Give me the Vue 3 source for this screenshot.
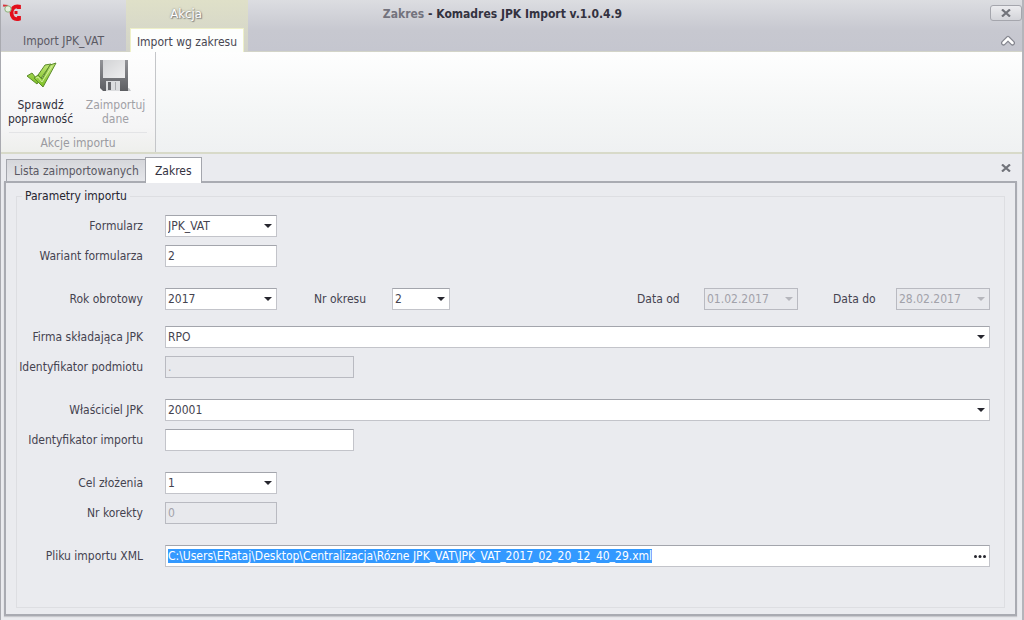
<script setup>
import { onMounted, ref } from 'vue'

const fileInput = ref(null)
const form = ref({
  form: 'JPK_VAT',
  variant: '2',
  year: '2017',
  period: '2',
  from: '01.02.2017',
  to: '28.02.2017',
  company: 'RPO',
  entityId: '.',
  owner: '20001',
  importId: '',
  purpose: '1',
  correction: '0',
  file: 'C:\\Users\\ERataj\\Desktop\\Centralizacja\\Rózne JPK_VAT\\JPK_VAT_2017_02_20_12_40_29.xml',
})

onMounted(() => {
  fileInput.value.focus({ preventScroll: true })
  fileInput.value.select()
})
</script>

<template>
  <div class="window">
    <header class="titlebar">
      <svg class="logo" width="20" height="20" viewBox="0 0 20 20" aria-hidden="true">
        <path d="M17 6V3.500C12 2.500 9.500 6 9.500 9.500C9.500 14 12 17 17 15.800V13" fill="none" stroke="#e3101c" stroke-width="3.800" />
        <path d="M12.500 9.500h3" stroke="#e3101c" stroke-width="3" />
        <path d="M1 2.500l5 0.500" stroke="#d8343c" stroke-width="2" />
        <circle cx="6" cy="6" r="3.200" fill="#e4efdc" stroke="#8fb07e" />
      </svg>
      <nav class="menu">
        <button class="menu-tab" type="button">Import JPK_VAT</button>
        <div class="context">
          <span class="context-title">Akcja</span>
          <button class="menu-tab current" type="button">Import wg zakresu</button>
        </div>
      </nav>
      <h1 class="title"><span>Zakres</span> - <b>Komadres JPK Import v.1.0.4.9</b></h1>
      <div class="window-tools">
        <button class="close" type="button" aria-label="Zamknij">
          <svg width="10" height="8" viewBox="0 0 10 8"><path d="M1 0.500l8 7M9 0.500l-8 7" stroke="#71737a" stroke-width="2.200" /></svg>
        </button>
        <button class="collapse" type="button" aria-label="Zwiń wstążkę">
          <svg width="14" height="11" viewBox="0 0 14 11"><path d="M2.500 8L7 3.500L11.500 8" fill="none" stroke="#85868f" stroke-width="5" stroke-linejoin="round" stroke-linecap="round" /><path d="M2.500 8L7 3.500L11.500 8" fill="none" stroke="#fff" stroke-width="2.500" stroke-linecap="round" /></svg>
        </button>
      </div>
    </header>

    <section class="ribbon">
      <div class="group">
        <div class="actions">
          <button class="action" type="button">
            <svg width="36" height="36" viewBox="0 0 36 36" aria-hidden="true">
              <defs>
                <linearGradient id="leaf" x1="0" y1="0" x2="0" y2="1"><stop offset="0" stop-color="#c0e676" /><stop offset="1" stop-color="#7cc024" /></linearGradient>
              </defs>
              <path d="M4 19l5-3l4 5L22 8l6-1L14 27z" fill="url(#leaf)" stroke="#5c8a2c" stroke-linejoin="round" />
              <path d="M11 21l4-3l4 4L27 8l6-2L20 30z" fill="url(#leaf)" stroke="#5c8a2c" stroke-linejoin="round" />
              <path d="M13 21l2-1l4 5L29 9" fill="none" stroke="#d3efa0" />
            </svg>
            <span>Sprawdź poprawność</span>
          </button>
          <button class="action" type="button" disabled>
            <svg width="36" height="36" viewBox="0 0 36 36" aria-hidden="true">
              <defs>
                <linearGradient id="body" x1="0" y1="0" x2="0" y2="1"><stop offset="0" stop-color="#929397" /><stop offset="1" stop-color="#5d5e62" /></linearGradient>
                <linearGradient id="paper" x1="0" y1="0" x2="1" y2="1"><stop offset="0" stop-color="#d2d3d5" /><stop offset="1" stop-color="#eeeeef" /></linearGradient>
              </defs>
              <path d="M5 34h28l-2-3z" fill="#c4c5c8" />
              <path d="M2 3h28v31H5l-3-3z" fill="url(#body)" />
              <path d="M5 3h22v18H5z" fill="url(#paper)" />
              <path d="M8 24h14v10H8z" fill="#dcdddf" />
              <path d="M10 25h3v8h-3z" fill="#66676b" />
              <path d="M17 25h1v8h-1z" fill="#a9aaad" />
            </svg>
            <span>Zaimportuj dane</span>
          </button>
        </div>
        <div class="caption">Akcje importu</div>
      </div>
    </section>

    <main class="workspace">
      <div class="tabs">
        <button class="tab" type="button">Lista zaimportowanych</button>
        <button class="tab active" type="button">Zakres</button>
        <button class="tab-close" type="button" aria-label="Zamknij kartę">
          <svg width="10" height="8" viewBox="0 0 10 8"><path d="M1 0.500l8 7M9 0.500l-8 7" stroke="#71737a" stroke-width="2.200" /></svg>
        </button>
      </div>

      <form class="panel" @submit.prevent>
        <fieldset>
          <legend>Parametry importu</legend>
          <div class="row">
            <label class="lead" for="form">Formularz</label>
            <div class="field medium">
              <select id="form" v-model="form.form"><option>JPK_VAT</option></select>
              <svg class="arrow" viewBox="0 0 8 4"><path d="M0 0h8L4 4z" /></svg>
            </div>
          </div>
          <div class="row">
            <label class="lead" for="variant">Wariant formularza</label>
            <div class="field medium"><input id="variant" v-model="form.variant" type="text"></div>
          </div>
          <div class="row group-start">
            <label class="lead" for="year">Rok obrotowy</label>
            <div class="field medium">
              <select id="year" v-model="form.year"><option>2017</option></select>
              <svg class="arrow" viewBox="0 0 8 4"><path d="M0 0h8L4 4z" /></svg>
            </div>
            <label class="period-label" for="period">Nr okresu</label>
            <div class="field small">
              <select id="period" v-model="form.period"><option>2</option></select>
              <svg class="arrow" viewBox="0 0 8 4"><path d="M0 0h8L4 4z" /></svg>
            </div>
            <div class="dates">
              <label for="from">Data od</label>
              <div class="field date off">
                <input id="from" v-model="form.from" type="text" disabled>
                <svg class="arrow" viewBox="0 0 8 4"><path d="M0 0h8L4 4z" /></svg>
              </div>
              <label class="to-label" for="to">Data do</label>
              <div class="field date off">
                <input id="to" v-model="form.to" type="text" disabled>
                <svg class="arrow" viewBox="0 0 8 4"><path d="M0 0h8L4 4z" /></svg>
              </div>
            </div>
          </div>
          <div class="row company">
            <label class="lead" for="company">Firma składająca JPK</label>
            <div class="field wide">
              <select id="company" v-model="form.company"><option>RPO</option></select>
              <svg class="arrow" viewBox="0 0 8 4"><path d="M0 0h8L4 4z" /></svg>
            </div>
          </div>
          <div class="row">
            <label class="lead" for="entity">Identyfikator podmiotu</label>
            <div class="field long off"><input id="entity" v-model="form.entityId" type="text" disabled></div>
          </div>
          <div class="row group-start">
            <label class="lead" for="owner">Właściciel JPK</label>
            <div class="field wide">
              <select id="owner" v-model="form.owner"><option>20001</option></select>
              <svg class="arrow" viewBox="0 0 8 4"><path d="M0 0h8L4 4z" /></svg>
            </div>
          </div>
          <div class="row">
            <label class="lead" for="import-id">Identyfikator importu</label>
            <div class="field long"><input id="import-id" v-model="form.importId" type="text"></div>
          </div>
          <div class="row group-start">
            <label class="lead" for="purpose">Cel złożenia</label>
            <div class="field medium">
              <select id="purpose" v-model="form.purpose"><option>1</option></select>
              <svg class="arrow" viewBox="0 0 8 4"><path d="M0 0h8L4 4z" /></svg>
            </div>
          </div>
          <div class="row">
            <label class="lead" for="correction">Nr korekty</label>
            <div class="field medium off"><input id="correction" v-model="form.correction" type="text" disabled></div>
          </div>
          <div class="row group-start">
            <label class="lead" for="file">Pliku importu XML</label>
            <div class="field wide">
              <input id="file" ref="fileInput" v-model="form.file" type="text" spellcheck="false">
              <button class="browse" type="button" aria-label="Wybierz plik">
                <svg width="12" height="3" viewBox="0 0 12 3"><circle cx="1.500" cy="1.500" r="1.500" /><circle cx="6" cy="1.500" r="1.500" /><circle cx="10.500" cy="1.500" r="1.500" /></svg>
              </button>
            </div>
          </div>
        </fieldset>
      </form>
    </main>
  </div>
</template>

<style>
body {
  margin: 0;
}
</style>

<style scoped>
* {
  box-sizing: border-box;
}

.window {
  display: flex;
  flex-direction: column;
  min-height: 100vh;
  border-left: 1px solid #a9aab0;
  border-right: 2px solid #b4b5bb;
  background: #eaebef;
  color: #45434f;
  font: 12px/14px "DejaVu Sans Condensed", "Noto Sans", sans-serif;
}

button,
input,
select {
  margin: 0;
  padding: 0;
  border: 0;
  border-radius: 0;
  outline: 0;
  background: none;
  color: inherit;
  font: inherit;
}

.titlebar {
  position: relative;
  display: flex;
  justify-content: space-between;
  height: 52px;
  background: linear-gradient(#dcdde1, #c7c8d0 60%, #c5c6cf);
  border-bottom: 1px solid #d3d4c8;
}

.logo {
  position: absolute;
  left: 1px;
  top: 3px;
}

.menu {
  display: flex;
  align-items: flex-end;
}

.menu-tab {
  height: 24px;
  padding: 4px 5px 0;
  color: #5b5a64;
  white-space: nowrap;
}

.menu > .menu-tab {
  width: 125px;
}

.context {
  display: flex;
  flex-direction: column;
  width: 122px;
  height: 51px;
  padding-left: 4px;
  align-items: flex-start;
  background: linear-gradient(#dfe0c8, #d2d3c9);
}

.context-title {
  width: 112px;
  height: 28px;
  line-height: 28px;
  text-align: center;
  color: #fff;
  font-size: 13px;
  text-shadow: 0 0 2px #777, 1px 1px 1px #888;
}

.menu-tab.current {
  flex: none;
  width: 114px;
  height: 24px;
  padding: 2px 0 0;
  border: 1px solid #eef0c8;
  border-bottom: 0;
  background: #fdfefd;
  color: #484752;
}

.title {
  position: absolute;
  top: 7px;
  left: 0;
  right: 18px;
  margin: 0;
  text-align: center;
  font-size: 12px;
  font-weight: bold;
  color: #33323f;
  pointer-events: none;
}

.title span {
  color: #73737d;
}

.window-tools {
  display: flex;
  flex-direction: column;
  align-items: flex-end;
  padding: 5px 0 0;
  gap: 12px;
}

.close {
  display: grid;
  place-items: center;
  width: 32px;
  height: 16px;
  border: 1px solid #a5a6ad;
  border-radius: 3px;
  background: linear-gradient(#ececef, #d3d4d9);
}

.collapse {
  display: grid;
  place-items: center;
  width: 28px;
  height: 14px;
}

.ribbon {
  display: flex;
  height: 102px;
  background: linear-gradient(#fefefe, #f4f6f6 60%, #eff1f2);
  border-bottom: 2px solid #d8dac9;
}

.group {
  display: flex;
  flex-direction: column;
  width: 155px;
  border-right: 1px solid #c4c6c9;
  background: linear-gradient(#fefefe, #f5f5f6 75%, #eeefec);
}

.actions {
  display: flex;
  flex: 1;
  padding: 5px 2px 0;
}

.action {
  display: flex;
  flex-direction: column;
  align-items: center;
  width: 76px;
  gap: 5px;
  color: #302f3b;
}

.action:disabled {
  color: #a0a0a6;
}

.action span {
  width: 72px;
  text-align: center;
}

.caption {
  height: 20px;
  margin: 0 8px;
  border-top: 1px solid #e3e4e6;
  line-height: 20px;
  text-align: center;
  color: #9a9aa0;
}

.workspace {
  display: flex;
  flex: 1;
  flex-direction: column;
  padding: 3px 5px 4px 3px;
}

.tabs {
  display: flex;
  align-items: flex-end;
  padding-left: 2px;
}

.tab {
  height: 22px;
  padding: 1px 6px 0 7px;
  border: 1px solid #a4a6ad;
  border-bottom: 0;
  border-right: 0;
  background: linear-gradient(#d6d7db, #e5e6ea);
  color: #5a5963;
  white-space: nowrap;
}

.active {
  position: relative;
  height: 26px;
  margin-bottom: -2px;
  padding: 0 9px;
  border-right: 1px solid #a4a6ad;
  background: #fff;
  color: #33323f;
}

.tab-close {
  display: grid;
  place-items: center;
  width: 16px;
  height: 16px;
  margin: 0 3px 5px auto;
}

.panel {
  display: flex;
  flex: 1;
  padding: 5px 10px 6px;
  border: 2px solid #a9abb2;
  box-shadow: 0 1px 1px #c8c9ce;
}

fieldset {
  flex: 1;
  min-width: 0;
  margin: 0;
  padding: 11px 14px 12px 0;
  border: 1px solid #dddee2;
}

legend {
  height: 16px;
  margin-left: 5px;
  padding: 0 3px;
  line-height: 16px;
  color: #26252f;
}

.row {
  display: flex;
  align-items: center;
  margin-top: 8px;
}

legend + .row {
  margin-top: 0;
}

.row.group-start {
  margin-top: 21px;
}

.row.company {
  margin-top: 16px;
}

label {
  white-space: nowrap;
}

.lead {
  flex: none;
  width: 126px;
  margin-right: 22px;
  text-align: right;
}

.field {
  position: relative;
  display: flex;
  flex: none;
  height: 22px;
  border: 1px solid #c3c4ca;
  border-top-color: #a3a5ac;
  background: #fff;
}

.field input,
.field select {
  flex: 1;
  width: 100%;
  min-width: 0;
  padding: 0 2px;
  appearance: none;
}

.field input::selection {
  background: #3399ff;
  color: #fff;
}

.medium {
  width: 112px;
}

.small {
  width: 58px;
}

.date {
  width: 94px;
}

.long {
  width: 189px;
}

.wide {
  flex: 1;
}

.off {
  border-color: #b9bac1;
  background: #e8e9ed;
}

.off input {
  color: #a2a2aa;
}

.arrow {
  position: absolute;
  top: 8px;
  right: 4px;
  width: 8px;
  height: 4px;
  fill: #26262e;
  pointer-events: none;
}

.off .arrow {
  fill: #b5b6bc;
}

.period-label {
  width: 78px;
  margin-left: 37px;
}

.dates {
  display: flex;
  align-items: center;
  margin-left: auto;
}

.dates label {
  width: 67px;
}

.dates .to-label {
  width: 63px;
  margin-left: 35px;
}

.browse {
  display: grid;
  place-items: center;
  width: 18px;
  fill: #26262e;
}
</style>
